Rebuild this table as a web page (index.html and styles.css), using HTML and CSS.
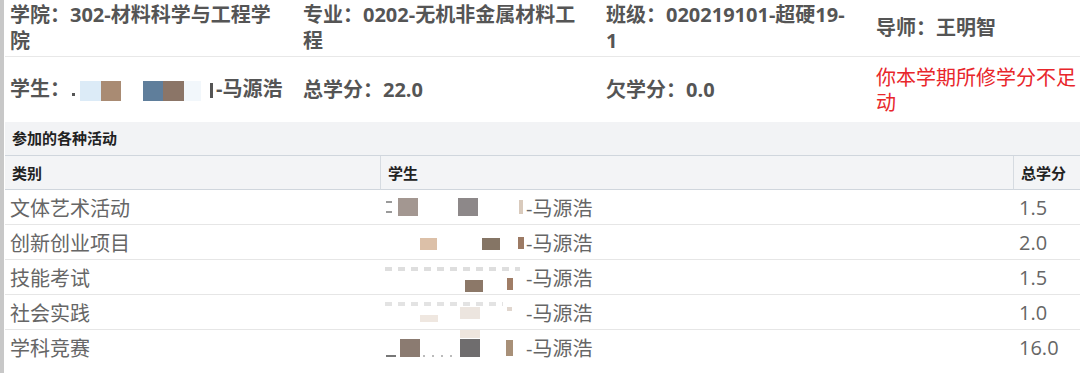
FILE: index.html
```html
<!DOCTYPE html>
<html lang="zh-CN">
<head>
<meta charset="utf-8">
<title>学分查询</title>
<link rel="stylesheet" href="styles.css">
</head>
<body>
<div class="page">
  <table class="info">
    <colgroup><col class="w1"><col class="w2"><col class="w3"><col class="w4"></colgroup>
    <tr class="r1">
      <td class="c1">学院：302-材料科学与工程学院</td>
      <td class="c2">专业：0202-无机非金属材料工程</td>
      <td class="c3">班级：020219101-超硬19-<wbr>1</td>
      <td class="c4">导师：王明智</td>
    </tr>
    <tr class="r2">
      <td class="c1 nowrap">学生：<span class="mz mh"></span>-马源浩</td>
      <td class="c2">总学分：22.0</td>
      <td class="c3">欠学分：0.0</td>
      <td class="c4 warn">你本学期所修学分不足动</td>
    </tr>
  </table>

  <div class="acts">
    <div class="acts-title">参加的各种活动</div>
    <table class="grid">
      <colgroup><col class="g1"><col class="g2"><col class="g3"></colgroup>
      <thead>
        <tr><th>类别</th><th>学生</th><th>总学分</th></tr>
      </thead>
      <tbody>
        <tr><td>文体艺术活动</td><td><div class="who"><span class="mz m1"></span>-马源浩</div></td><td class="num">1.5</td></tr>
        <tr><td>创新创业项目</td><td><div class="who"><span class="mz m2"></span>-马源浩</div></td><td class="num">2.0</td></tr>
        <tr><td>技能考试</td><td><div class="who"><span class="mz m3"></span>-马源浩</div></td><td class="num">1.5</td></tr>
        <tr><td>社会实践</td><td><div class="who"><span class="mz m4"></span>-马源浩</div></td><td class="num">1.0</td></tr>
        <tr><td>学科竞赛</td><td><div class="who"><span class="mz m5"></span>-马源浩</div></td><td class="num">16.0</td></tr>
      </tbody>
    </table>
  </div>
</div>
</body>
</html>
```

FILE: styles.css
```css
html, body {
  margin: 0;
}

body {
  font-family: "Open Sans", "Noto Sans CJK SC", sans-serif;
  background: #fff;
  border-left: 4px solid #c8c8c8;
  padding-left: 1px;
  min-height: 373px;
  box-sizing: border-box;
  overflow: hidden;
}

.page {
  width: 1075px;
}

/* ---------- info table ---------- */
.info {
  width: 1075px;
  table-layout: fixed;
  border-collapse: separate;
  border-spacing: 0;
  font-size: 20px;
  font-weight: 700;
  color: #555;
  line-height: 26px;
}

.w1 { width: 293px; }
.w2 { width: 303px; }
.w3 { width: 270px; }
.w4 { width: 209px; }

.info td {
  padding: 0 0 0 5px;
  vertical-align: middle;
}

.info .c1 { padding-right: 18px; }
.info .c2 { padding-right: 16px; }
.info .c3 { padding-right: 20px; }
.info .c4 { padding-right: 0; }

.info .nowrap { white-space: nowrap; }

.r1 td {
  height: 56px;
  border-bottom: 1px solid #e8e8e8;
}

.r2 td {
  height: 65px;
}

.info .warn {
  color: #e8262b;
  font-weight: 400;
  line-height: 25px;
}

/* ---------- activities ---------- */
.acts-title {
  height: 33px;
  line-height: 33px;
  background: #f2f3f5;
  border-bottom: 1px solid #d0d6dd;
  padding-left: 7px;
  font-size: 15px;
  font-weight: 700;
  color: #222;
}

.grid {
  width: 1075px;
  table-layout: fixed;
  border-collapse: separate;
  border-spacing: 0;
}

.g1 { width: 375px; }
.g2 { width: 633px; }
.g3 { width: 67px; }

.grid th {
  height: 33px;
  padding: 0 0 0 7px;
  background: #f3f4f6;
  border-bottom: 1px solid #d0d6dd;
  text-align: left;
  font-size: 15px;
  font-weight: 700;
  color: #222;
}

.grid th + th {
  border-left: 1px solid #d6dbe1;
}

.grid td {
  height: 34px;
  padding: 0 0 0 5px;
  border-bottom: 1px solid #e6e6e6;
  font-size: 20px;
  color: #666;
  vertical-align: middle;
  white-space: nowrap;
}

.grid td.num {
  padding-left: 6px;
}

.grid tbody tr:last-child td {
  border-bottom: 0;
}

.who {
  display: flex;
  align-items: center;
  height: 34px;
}

/* ---------- pixelated (mosaic) student numbers ---------- */
.mz {
  display: inline-block;
  flex: none;
  height: 34px;
  width: 141px;
  background-repeat: no-repeat;
}

.mh {
  width: 146px;
  height: 24px;
  vertical-align: middle;
  background-image:
    linear-gradient(#555, #555),
    linear-gradient(#dcebf7, #dcebf7),
    linear-gradient(#a98b73, #a98b73),
    linear-gradient(#5f7e9b, #5f7e9b),
    linear-gradient(#8b7567, #8b7567),
    linear-gradient(#f2f7fb, #f2f7fb),
    linear-gradient(#555, #555);
  background-position: 2px 14px, 10px 2px, 31px 2px, 73px 2px, 93px 2px, 114px 2px, 140px 4px;
  background-size: 3px 3px, 21px 20px, 20px 20px, 20px 20px, 21px 20px, 17px 20px, 3px 15px;
}

.m1 {
  background-image:
    linear-gradient(#a39791, #a39791),
    linear-gradient(#8d8889, #8d8889),
    linear-gradient(#9a9a9a, #9a9a9a),
    linear-gradient(#9a9a9a, #9a9a9a),
    linear-gradient(#d9cabc, #d9cabc);
  background-position: 13px 8px, 73px 8px, 1px 11px, 1px 21px, 134px 10px;
  background-size: 20px 18px, 20px 18px, 6px 2px, 6px 2px, 4px 14px;
}

.m2 {
  background-image:
    linear-gradient(#dcc0a8, #dcc0a8),
    linear-gradient(#857565, #857565),
    linear-gradient(#9c7a64, #9c7a64);
  background-position: 35px 13px, 97px 13px, 133px 12px;
  background-size: 17px 12px, 18px 12px, 6px 12px;
}

.m3 {
  background-image:
    repeating-linear-gradient(90deg, #dedede 0 7px, transparent 7px 13px),
    linear-gradient(#8c7868, #8c7868),
    linear-gradient(#a07d66, #a07d66);
  background-position: 0 7px, 80px 20px, 122px 18px;
  background-size: 135px 4px, 18px 12px, 6px 12px;
}

.m4 {
  background-image:
    repeating-linear-gradient(90deg, #e3e3e3 0 7px, transparent 7px 13px),
    linear-gradient(#efe7e0, #efe7e0),
    linear-gradient(#ece5df, #ece5df),
    linear-gradient(#e0d6ce, #e0d6ce);
  background-position: 0 7px, 35px 20px, 75px 12px, 122px 12px;
  background-size: 118px 4px, 18px 7px, 20px 12px, 5px 4px;
}

.m5 {
  background-image:
    linear-gradient(#8b7b71, #8b7b71),
    linear-gradient(#6f6d6e, #6f6d6e),
    linear-gradient(#efe6de, #efe6de),
    linear-gradient(#a89078, #a89078),
    linear-gradient(#777, #777),
    repeating-linear-gradient(90deg, #bbb 0 2px, transparent 2px 9px);
  background-position: 15px 9px, 75px 9px, 75px 0, 121px 10px, 1px 25px, 38px 25px;
  background-size: 20px 18px, 20px 18px, 20px 8px, 7px 16px, 10px 2px, 36px 2px;
}
```
